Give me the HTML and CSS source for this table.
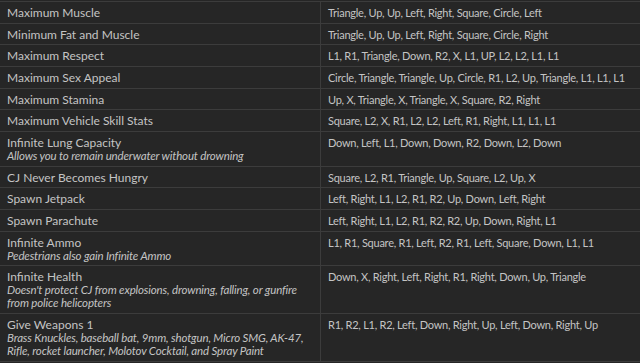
FILE: index.html
```html
<!DOCTYPE html>
<html>
<head>
<meta charset="utf-8">
<link rel="stylesheet" href="styles.css">
</head>
<body>
<div class="table">
  <div class="row"><div class="name">Maximum Muscle</div><div class="code">Triangle, Up, Up, Left, Right, Square, Circle, Left</div></div>
  <div class="row"><div class="name">Minimum Fat and Muscle</div><div class="code">Triangle, Up, Up, Left, Right, Square, Circle, Right</div></div>
  <div class="row"><div class="name">Maximum Respect</div><div class="code">L1, R1, Triangle, Down, R2, X, L1, UP, L2, L2, L1, L1</div></div>
  <div class="row"><div class="name">Maximum Sex Appeal</div><div class="code">Circle, Triangle, Triangle, Up, Circle, R1, L2, Up, Triangle, L1, L1, L1</div></div>
  <div class="row"><div class="name">Maximum Stamina</div><div class="code">Up, X, Triangle, X, Triangle, X, Square, R2, Right</div></div>
  <div class="row"><div class="name">Maximum Vehicle Skill Stats</div><div class="code">Square, L2, X, R1, L2, L2, Left, R1, Right, L1, L1, L1</div></div>
  <div class="row"><div class="name">Infinite Lung Capacity<br><em>Allows you to remain underwater without drowning</em></div><div class="code">Down, Left, L1, Down, Down, R2, Down, L2, Down</div></div>
  <div class="row"><div class="name">CJ Never Becomes Hungry</div><div class="code">Square, L2, R1, Triangle, Up, Square, L2, Up, X</div></div>
  <div class="row"><div class="name">Spawn Jetpack</div><div class="code">Left, Right, L1, L2, R1, R2, Up, Down, Left, Right</div></div>
  <div class="row"><div class="name">Spawn Parachute</div><div class="code">Left, Right, L1, L2, R1, R2, R2, Up, Down, Right, L1</div></div>
  <div class="row"><div class="name">Infinite Ammo<br><em>Pedestrians also gain Infinite Ammo</em></div><div class="code">L1, R1, Square, R1, Left, R2, R1, Left, Square, Down, L1, L1</div></div>
  <div class="row"><div class="name">Infinite Health<br><em>Doesn't protect CJ from explosions, drowning, falling, or gunfire from police helicopters</em></div><div class="code">Down, X, Right, Left, Right, R1, Right, Down, Up, Triangle</div></div>
  <div class="row"><div class="name">Give Weapons 1<br><em>Brass Knuckles, baseball bat, 9mm, shotgun, Micro SMG, AK-47, Rifle, rocket launcher, Molotov Cocktail, and Spray Paint</em></div><div class="code">R1, R2, L1, R2, Left, Down, Right, Up, Left, Down, Right, Up</div></div>
</div>
</body>
</html>
```
FILE: styles.css
```css
html, body {
  margin: 0;
  padding: 0;
  background: #262626;
}
body {
  font-family: Lato, "Liberation Sans", sans-serif;
  font-size: 12px;
  color: #c4c4c4;
}
.table {
  padding-top: 1px;
  width: 640px;
}
.row {
  display: grid;
  grid-template-columns: 320px 1fr;
  border-top: 1px solid #3c3c3c;
}
.row:last-child {
  border-bottom: 1px solid #3c3c3c;
}
.name, .code {
  padding: 4px 7px 3.67px 7px;
  line-height: 13px;
}
.code {
  border-left: 1px solid #3c3c3c;
  font-size: 11px;
  letter-spacing: -0.25px;
}
em {
  font-style: italic;
  font-size: 11.5px;
  letter-spacing: -0.15px;
}
```
